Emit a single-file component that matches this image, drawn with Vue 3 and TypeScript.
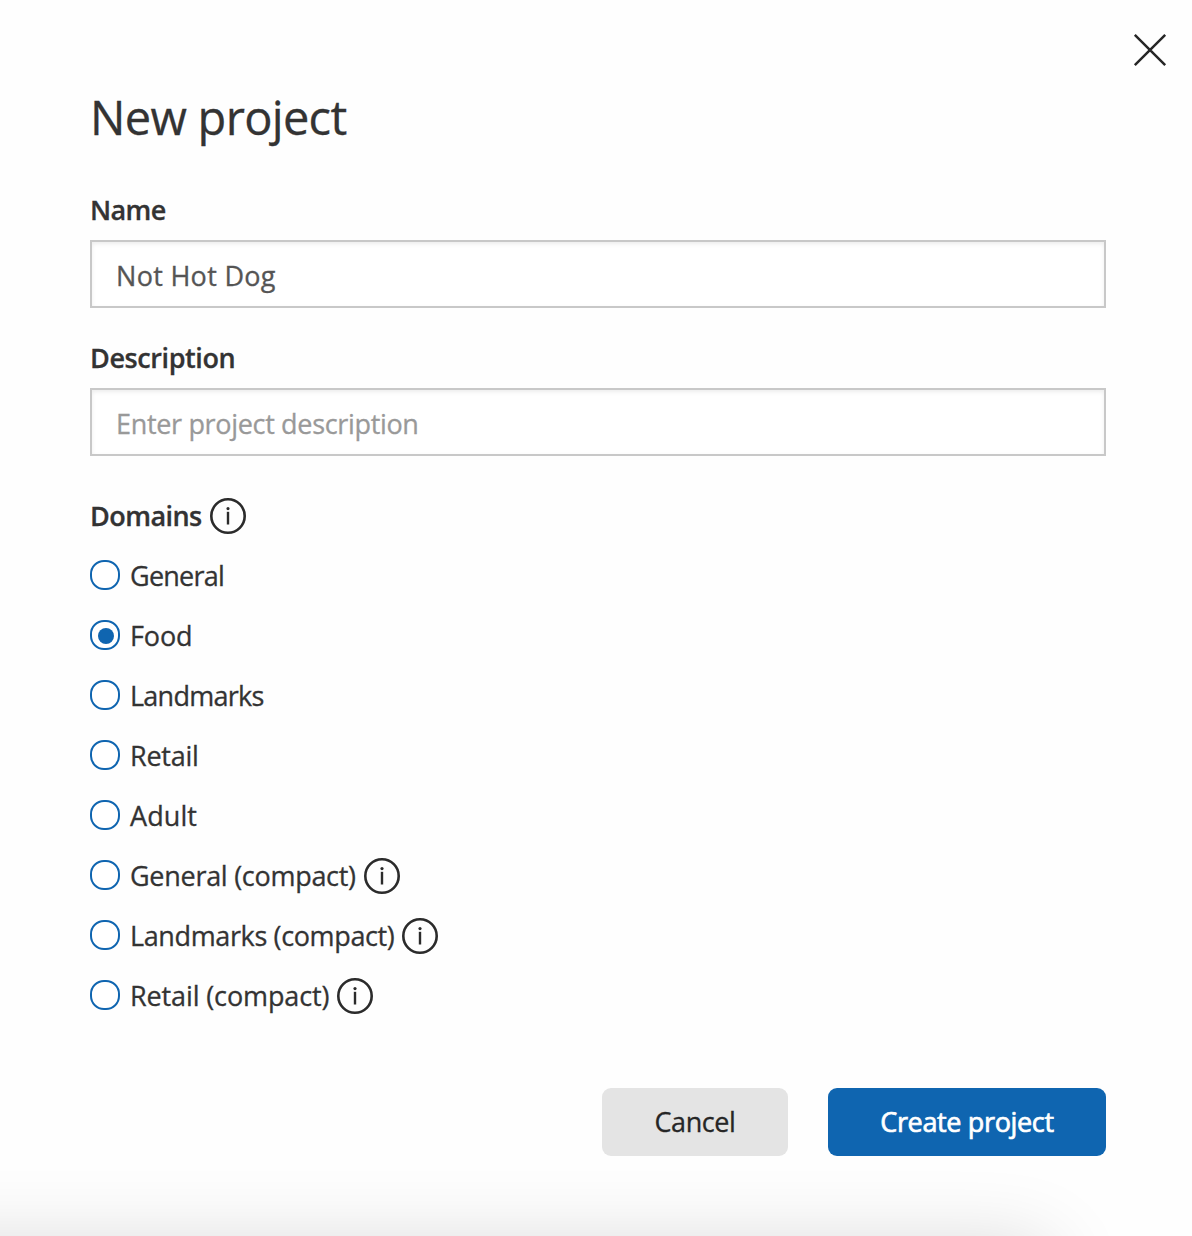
<script setup lang="ts">
import { ref } from 'vue'

interface Domain {
  id: string
  label: string
  spacing: string
  info?: boolean
}

const name = ref('Not Hot Dog')
const description = ref('')
const selected = ref('food')

const domains: Domain[] = [
  { id: 'general', label: 'General', spacing: '-0.75px' },
  { id: 'food', label: 'Food', spacing: '-0.1px' },
  { id: 'landmarks', label: 'Landmarks', spacing: '-0.75px' },
  { id: 'retail', label: 'Retail', spacing: '-0.25px' },
  { id: 'adult', label: 'Adult', spacing: '0.1px' },
  { id: 'general-compact', label: 'General (compact)', spacing: '-0.28px', info: true },
  { id: 'landmarks-compact', label: 'Landmarks (compact)', spacing: '-0.37px', info: true },
  { id: 'retail-compact', label: 'Retail (compact)', spacing: '-0.12px', info: true },
]
</script>

<template>
  <main class="dialog">
    <button class="close" type="button" aria-label="Close">
      <svg width="34" height="34" viewBox="0 0 34 34">
        <path d="M1.8 1.8 32.2 32.2M32.2 1.8 1.8 32.2" fill="none" stroke="#262626" stroke-width="2.5" />
      </svg>
    </button>

    <h1 class="title">New project</h1>

    <label class="label name-label" for="name">Name</label>
    <input id="name" v-model="name" class="input name-input" type="text" />

    <label class="label description-label" for="description">Description</label>
    <input
      id="description"
      v-model="description"
      class="input description-input"
      type="text"
      placeholder="Enter project description"
    />

    <div class="domains-head">
      <span class="label domains-label">Domains</span>
      <svg class="info" viewBox="0 0 36 36">
        <circle cx="18" cy="18" r="16.7" fill="none" stroke="#2b2b2b" stroke-width="2.6" />
        <path d="M18 13.8V26.5" stroke="#2b2b2b" stroke-width="2.4" />
        <circle cx="18" cy="10.6" r="1.6" fill="#2b2b2b" />
      </svg>
    </div>

    <div class="domains">
      <label v-for="d in domains" :key="d.id" class="option">
        <input v-model="selected" class="radio" type="radio" name="domain" :value="d.id" />
        <span class="option-text" :style="{ letterSpacing: d.spacing }">{{ d.label }}</span>
        <svg v-if="d.info" class="info" viewBox="0 0 36 36">
          <circle cx="18" cy="18" r="16.7" fill="none" stroke="#2b2b2b" stroke-width="2.6" />
          <path d="M18 13.8V26.5" stroke="#2b2b2b" stroke-width="2.4" />
          <circle cx="18" cy="10.6" r="1.6" fill="#2b2b2b" />
        </svg>
      </label>
    </div>

    <div class="actions">
      <button class="btn cancel" type="button">Cancel</button>
      <button class="btn create" type="button">Create project</button>
    </div>
    <div class="page-shadow"></div>
  </main>
</template>

<style>
body {
  margin: 0;
  background: #fff;
}
</style>

<style scoped>
.dialog {
  position: relative;
  box-sizing: border-box;
  display: flex;
  flex-direction: column;
  width: 1192px;
  height: 1236px;
  padding: 33px 86px 80px 90px;
  overflow: hidden;
  background: #fefefe;
  color: #333;
  font-family: 'Open Sans', 'Noto Sans', sans-serif;
  font-size: 27px;
  -webkit-text-stroke: 0.3px currentColor;
}
.close {
  display: flex;
  align-self: flex-end;
  flex: none;
  height: 34px;
  margin: 0 -61px 0 0;
  padding: 0;
  border: 0;
  background: none;
}
.title {
  height: 64px;
  margin: 18px 0 0;
  font-size: 47px;
  font-weight: 400;
  line-height: 64px;
  letter-spacing: -0.7px;
  white-space: nowrap;
}
.label {
  height: 36px;
  font-weight: 600;
  line-height: 36px;
}
.name-label {
  margin-top: 43px;
  letter-spacing: -0.6px;
}
.description-label {
  margin-top: 32px;
  letter-spacing: -0.4px;
}
.domains-label {
  letter-spacing: -0.55px;
}
.input {
  box-sizing: border-box;
  width: 1016px;
  height: 68px;
  margin: 12px 0 0;
  padding: 2px 24px 0;
  border: 2px solid #c8c8c8;
  border-radius: 0;
  outline: 0;
  background: #fff;
  box-shadow: inset 0 2px 4px rgba(0, 0, 0, 0.075);
  color: #555;
  font: inherit;
}
.name-input {
  letter-spacing: 0.3px;
}
.description-input {
  letter-spacing: -0.33px;
}
.input::placeholder {
  color: #999;
  opacity: 1;
}
.domains-head {
  display: flex;
  align-items: center;
  height: 36px;
  margin-top: 42px;
}
.info {
  flex: none;
  width: 36px;
  height: 36px;
  margin-left: 8px;
}
.domains {
  display: flex;
  flex-direction: column;
  margin-top: 12px;
}
.option {
  display: flex;
  align-items: center;
  height: 60px;
}
.radio {
  box-sizing: border-box;
  display: flex;
  align-items: center;
  justify-content: center;
  flex: none;
  width: 30px;
  height: 30px;
  margin: -2px 10px 0 0;
  border: 2px solid #0f65b0;
  border-radius: 14px;
  appearance: none;
  background: #fff;
}
.radio:checked::before {
  content: '';
  width: 16px;
  height: 16px;
  margin: 2px 0 0 2px;
  border-radius: 50%;
  background: #0f65b0;
}
.option-text {
  line-height: 36px;
  white-space: nowrap;
}
.actions {
  display: flex;
  justify-content: flex-end;
  gap: 40px;
  margin-top: auto;
}
.btn {
  height: 68px;
  padding: 0 0 2px;
  border: 0;
  border-radius: 9px;
  font: inherit;
  white-space: nowrap;
}
.cancel {
  width: 186px;
  background: #e4e4e4;
  color: #262626;
  letter-spacing: -0.4px;
}
.create {
  width: 278px;
  background: #0f65b0;
  color: #fff;
  letter-spacing: -0.35px;
  -webkit-text-stroke-width: 0.7px;
}
.page-shadow {
  position: absolute;
  top: 1246px;
  left: -100px;
  width: 1148px;
  height: 100px;
  box-shadow: 0 0 80px rgba(0, 0, 0, 0.16);
  pointer-events: none;
}
</style>
